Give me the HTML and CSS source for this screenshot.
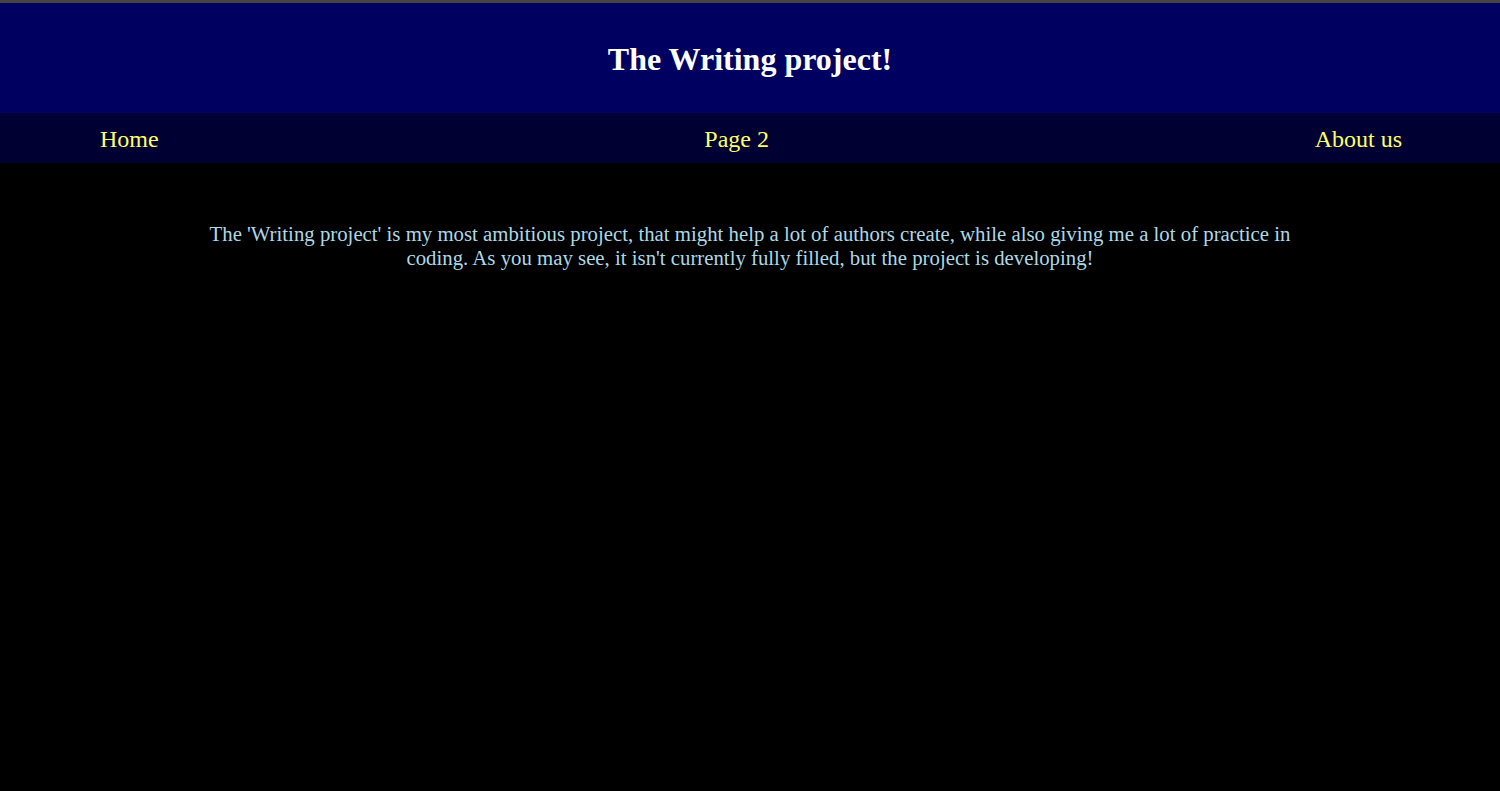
FILE: index.html
```html
<!DOCTYPE html>
<html>
<head>
<meta charset="utf-8">
<title>The Writing project!</title>
<link rel="stylesheet" href="styles.css">
</head>
<body>
<header class="site-header">
  <h1 class="title">The Writing project!</h1>
</header>
<nav class="site-nav">
  <a class="nav-link" href="#">Home</a>
  <a class="nav-link" href="#">Page 2</a>
  <a class="nav-link" href="#">About us</a>
</nav>
<main class="content">
  <p class="intro">The 'Writing project' is my most ambitious project, that might help a lot of authors create, while also giving me a lot of practice in coding. As you may see, it isn't currently fully filled, but the project is developing!</p>
</main>
</body>
</html>
```

FILE: styles.css
```css
html, body {
  margin: 0;
  padding: 0;
  background: #000000;
  font-family: "Liberation Serif", "Times New Roman", serif;
}

body {
  border-top: 3px solid #444444;
  min-height: 788px;
}

.site-header {
  background: #000060;
  height: 110px;
  display: flex;
  align-items: center;
  justify-content: center;
}

.title {
  margin: 0;
  color: #ffffff;
  font-size: 32px;
  font-weight: bold;
  padding-top: 2px;
}

.site-nav {
  background: #000033;
  height: 50px;
  box-sizing: border-box;
  display: flex;
  align-items: center;
  justify-content: space-between;
  padding: 2px 98px 0 100px;
}

.nav-link {
  color: #ffff66;
  text-decoration: none;
  font-size: 24px;
}

.content {
  padding-top: 59px;
}

.intro {
  margin: 0 auto;
  width: 1120px;
  text-align: center;
  color: #add8e6;
  font-size: 20.8px;
  line-height: 24px;
}
```
